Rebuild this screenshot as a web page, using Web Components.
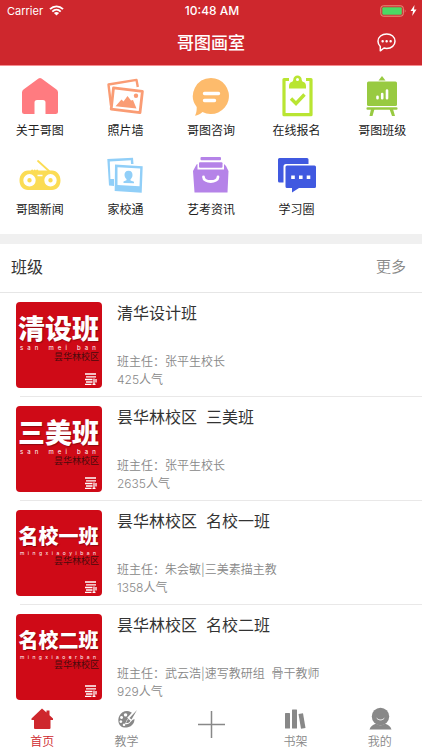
<!DOCTYPE html>
<html lang="zh-CN">
<head>
<meta charset="utf-8">
<meta name="viewport" content="width=device-width, initial-scale=1">
<title>哥图画室</title>
<style>
  html, body { margin: 0; height: 100%; }
  body { background: #fff; font-family: Inter, "Noto Sans CJK SC", sans-serif; color: #333; }
</style>
</head>
<body>
<studio-app></studio-app>

<script>
const define = (name, render) => customElements.define(name, class extends HTMLElement {
  connectedCallback() {
    if (this.shadowRoot) return;
    this.attachShadow({ mode: 'open' }).innerHTML = render(this);
  }
});

const icons = {
  house: `<path fill="#ff7b80" d="M20.500 4.600Q22 3.500 23.500 4.600L38.500 15.500Q40 16.600 40 18.500V37.500Q40 40 37.500 40H27.500V28.500Q27.500 26 25 26H19Q16.500 26 16.500 28.500V40H6.500Q4 40 4 37.500V18.500Q4 16.600 5.500 15.500Z"/>`,
  photos: `<g fill="none" stroke="#fa9c74" stroke-width="2.400" stroke-linejoin="round"><path d="M8 31.500 5.500 10.500 33.500 5.900 34.800 13"/><path stroke-width="2.800" fill="#fff" d="M10.500 13.800 39.400 17.300 37 38.600 8.200 35.100Z"/></g><path fill="#fa9c74" d="M12.500 32.300 18.500 25.500 20.500 27.500 24.500 22 28 26.500 30 26 33.500 34.500Z"/><circle cx="33" cy="21.800" r="2.200" fill="#fa9c74"/>`,
  bubble: `<path fill="#fdbb6c" d="M22 4a18 18 0 1 1-8.500 33.900C11 40 9 41 6 41.700 7.500 39 7.800 36 7.700 33A18 18 0 0 1 22 4Z"/><path stroke="#fff" stroke-width="3.400" stroke-linecap="round" d="M15.500 19.500H29.500M15.500 26.500H25.500"/>`,
  clipboard: `<path fill="none" stroke="#b9e532" stroke-width="3.200" stroke-linejoin="round" d="M14 5.500H9V40.700H36V5.500H31"/><path fill="#b9e532" fill-rule="evenodd" d="M22.500 1.500a4.200 4.200 0 0 1 4.200 4.200q0 1.800 1.800 2.300 2.500.8 2.500 4.500v2H14v-2q0-3.700 2.500-4.500 1.800-.5 1.800-2.300a4.200 4.200 0 0 1 4.200-4.200Zm0 2.500a1.500 1.500 0 1 0 0 3 1.500 1.500 0 0 0 0-3Z"/><path fill="none" stroke="#b9e532" stroke-width="3.400" d="m16 24.500 5 5 8.500-9"/>`,
  easel: `<g fill="#98ca41"><path d="M22 2 25.500 6.500H18.500Z"/><rect x="7" y="7.500" width="30" height="24.500" rx="1.500"/><rect x="6.500" y="33.200" width="31" height="2.600" rx="1"/><path d="M11 35h3.500L12.500 42H9.500ZM29.500 35H33L35 42H32Z"/></g><path stroke="#fff" stroke-width="2.600" stroke-linecap="round" d="M17.500 22.800v1.500M22.200 20v4.300M27 16.500v7.800"/>`,
  radio: `<path stroke="#fbdc54" stroke-width="1.800" stroke-linecap="round" d="M20 8 31 18"/><path fill="#fbdc54" d="M13 17.500q1-2 2.500 0 1-2 2.500 0 1-2 2.500 0H34c5 0 8.500 4.500 8.500 10S39 37 34 37H10c-5 0-8.500-4-8.500-9.500S5 17.500 10 17.500Z"/><g fill="none" stroke="#fff"><circle cx="11.500" cy="27.300" r="4.200" stroke-width="4"/><circle cx="32.500" cy="27.300" r="4.200" stroke-width="4"/><path stroke-width="1.500" d="M19.500 22.500H24.500"/></g>`,
  portraits: `<path fill="#91cff8" d="M4.300 6 30 4.700 30.500 11H28L27.800 7.200 6.800 8.400 7.400 26H11V33L6 32.500Z"/><path fill="#91cff8" fill-rule="evenodd" d="M12 11.500 39.700 13.300 38.700 39.700 11.700 38ZM14.500 14.200V32L36.500 33.300 37.200 15.600Z"/><path fill="#91cff8" d="M25.500 17.800c3 0 4 2 4 4.300 0 2-.9 3.400-2 4.200v1.200l3.500 1.300v1.500l-10.500-.4v-1.500l3-1.200v-1.200c-1.200-.9-2-2.300-2-4.200 0-2.300 1.200-4 4-4Z"/>`,
  drawer: `<g fill="#b583e8"><rect x="11.500" y="4" width="20.500" height="3.200" rx="1"/><rect x="10" y="9.300" width="23.500" height="5.500" rx="1"/><path d="M7.500 11.500 8.500 11V16.500H35V11L37 13 39.500 18 38.500 39.500H5.500L4 18Z"/></g><path fill="none" stroke="#fff" stroke-width="2.800" stroke-linecap="round" d="M14.500 24c0 6 14.500 6 14.500 0"/>`,
  chats: `<path fill="#4059e0" d="M4.500 5H32q1.500 0 1.500 1.500V11H11Q8.500 11 8.500 13.500V29.500H4.500Q3 29.500 3 28V6.500Q3 5 4.500 5Z"/><path fill="#4059e0" d="M12 12.500H39.500Q41 12.500 41 14V33.500Q41 35 39.500 35H24L17 39.500V35H12Q10.500 35 10.500 33.500V14Q10.500 12.500 12 12.500Z"/><path fill="#fff" d="M16.200 22.500h3.600v3.600h-3.600ZM24 22.500h3.600v3.600H24ZM31.700 22.500h3.600v3.600h-3.600Z"/>`,
  tabHome: `<path fill="currentColor" d="M12 1.500 16.500 5.500V3.500H19.500V8.200L23 11.500V13H20.500V21Q20.500 22 19.500 22H5Q4 22 4 21V13H1.500V11.500Z"/>`,
  tabPalette: `<path fill="currentColor" fill-rule="evenodd" d="M18.500 7.500C16 3.500 11 3 7.500 5.200 2.500 8.500 2 16 6 19.300c2.500 2 5.500 1.200 7 .9 4-.8 6.500-4 6.500-8.200l-2 1-3.500 3.500c-1.500 1-3.500 1-4 .2l1.500-2.700c0-1.500 1.500-2.500 2.800-2.300ZM10.500 6.200a1.700 1.700 0 1 0 .1 0ZM6.500 9a1.500 1.500 0 1 0 .1 0ZM5.800 13.200a1.400 1.400 0 1 0 .1 0ZM9 16.500a1.300 1.300 0 1 0 .1 0Z"/><path stroke="#fff" stroke-width="3.500" d="m13.500 12 6-6.500"/><path fill="currentColor" d="M22 3 16.500 12.500 14.500 11ZM13.500 12l2 1.700c-1 2-2.500 2.500-4.500 2.300 1-1 .7-2.800 2.500-4Z"/>`,
  tabBooks: `<g fill="currentColor"><rect x="2" y="6" width="5" height="15.500" rx=".5"/><rect x="9" y="2.500" width="5" height="19" rx=".5"/><path d="M15.500 7 20 6.300 22.500 21 18 21.700Z"/></g>`,
  tabPerson: `<g fill="currentColor"><circle cx="12.500" cy="9.500" r="8.700"/><path d="M1.500 22.500c1-3.500 3.500-5 6.500-5.800 3 2 6 2 9 0 3 .8 5.500 2.300 6.500 5.800Z"/></g><path fill="none" stroke="#fff" stroke-linecap="round" d="M9 11.500c2 2 5 2 7 0"/>`
};
const icon = (name, size) => `<svg width="${size}" height="${size}" viewBox="0 0 ${size} ${size}" fill="none" aria-hidden="true">${icons[name]}</svg>`;

define('status-bar', () => `
  <style>
    :host { display: grid; grid-template-columns: 1fr auto 1fr; align-items: center; height: 20px; padding: 1px 5px 0 7px; box-sizing: border-box; color: #fff; font-size: 11px; line-height: 16px; }
    .left, .right { display: flex; align-items: center; gap: 6px; }
    .right { justify-content: flex-end; gap: 3px; }
    time { font-size: 12px; font-weight: 500; }
    svg { display: block; }
  </style>
  <span class="left"><span>Carrier</span>
    <svg width="15" height="11" viewBox="0 0 15 11" fill="none" stroke="#fff" stroke-width="1.900"><path d="M1 4.200C4.700.4 10.300.4 14 4.200M3.300 6.600c2.500-2.400 5.900-2.400 8.400 0"/><path fill="#fff" stroke="none" d="M7.500 10.500 4.900 8c1.500-1.400 3.700-1.400 5.200 0Z"/></svg>
  </span>
  <time>10:48 AM</time>
  <span class="right">
    <svg width="27" height="12" viewBox="0 0 27 12"><rect x=".8" y=".8" width="22.500" height="10.400" rx="2.500" fill="none" stroke="#e6937f"/><rect x="2.300" y="2.300" width="19.500" height="7.400" rx="1" fill="#4cd964"/><path fill="#e6937f" d="M24.800 4.200q1.600 1.800 0 3.600Z"/></svg>
    <svg width="7" height="11" viewBox="0 0 7 11"><path fill="#fff" d="M4.500 0 .5 6H3L2.200 11 6.500 4.500H4Z"/></svg>
  </span>`);

define('app-header', () => `
  <style>
    :host { display: block; flex: none; background: #ce272d; border-bottom: 1px solid #f58c90; }
    .bar { display: grid; grid-template-columns: 1fr auto 1fr; align-items: center; height: 45px; padding: 0 25px; }
    h1 { grid-column: 2; margin: 0; color: #fff; font-size: 17px; line-height: 24px; font-weight: 500; }
    button { justify-self: end; display: block; border: 0; padding: 0; background: none; }
    svg { display: block; }
  </style>
  <status-bar></status-bar>
  <div class="bar">
    <h1><slot></slot></h1>
    <button aria-label="消息"><svg width="21" height="21" viewBox="0 0 21 21" fill="none" stroke="#fff" stroke-width="1.500" stroke-linejoin="round"><path d="M10.700 2C15.500 2 19 5 19 9.200s-3.500 7.200-8.300 7.200c-1 0-2-.1-2.700-.4L4.300 18.800V14.500C2.800 13 2 11.300 2 9.200 2 5 5.800 2 10.700 2Z"/><path stroke-width="2.400" stroke-linecap="round" d="M6.600 9.300h.1M10.600 9.300h.1M14.600 9.300h.1"/></svg></button>
  </div>`);

define('menu-item', el => `
  <style>
    :host { display: block; }
    a { display: flex; flex-direction: column; align-items: center; gap: 4px; color: #222; text-decoration: none; font-size: 12px; line-height: 17px; white-space: nowrap; }
    svg { display: block; }
  </style>
  <a href="#">${icon(el.getAttribute('icon'), 44)}<span><slot></slot></span></a>`);

define('menu-grid', () => `
  <style>
    :host { display: grid; grid-template-columns: repeat(5, 1fr); row-gap: 14px; margin: 0 -3px; padding: 8px 0 16px; }
  </style><slot></slot>`);

define('section-head', el => `
  <style>
    :host { display: flex; align-items: center; justify-content: space-between; height: 48px; padding: 0 16px 0 11px; border-top: 10px solid #f0f0f0; border-bottom: 1px solid #e6e6e6; }
    h2 { margin: 0; font-size: 16px; line-height: 24px; font-weight: 400; }
    a { color: #888; font-size: 15px; line-height: 24px; font-weight: 350; text-decoration: none; }
    h2, a { padding-bottom: 2px; }
  </style>
  <h2><slot></slot></h2><a href="#">${el.getAttribute('more')}</a>`);

define('class-cover', el => {
  const name = el.getAttribute('name');
  const letters = [...el.getAttribute('latin')].map(c => `<span>${c === ' ' ? '&nbsp;' : c}</span>`).join('');
  return `
  <style>
    :host { display: flex; flex-direction: column; flex: none; box-sizing: border-box; width: 86px; height: 86px; padding: 14px 3px 3px 2px; border-radius: 4px; background: #cf0a17; color: #fff; overflow: hidden; }
    .name { height: 28px; display: flex; align-items: center; justify-content: center; font-size: 27px; font-weight: 900; line-height: 28px; white-space: nowrap; text-shadow: 1px 1px 1px #8f0810; }
    .latin { display: flex; justify-content: space-between; padding: 0 3px 0 2px; font-size: 6px; line-height: 8px; }
    .campus { align-self: flex-end; color: #4a0a0c; font-size: 9px; line-height: 10px; }
    .four { height: 26px; font-size: 20px; }
    .four + .latin { font-size: 5px; line-height: 6px; }
    svg { display: block; align-self: flex-end; margin: auto 2px 0 0; }
  </style>
  <div class="name ${name.length > 3 ? 'four' : ''}">${name}</div>
  <div class="latin">${letters}</div>
  <div class="campus">昙华林校区</div>
  <svg width="12" height="12" viewBox="0 0 12 12" fill="none" stroke="#fff" stroke-width="1.300"><path d="M0 1H11M1 3.800H11M0 6.500H7.500M1 9H7.500M0 11.300H6.500M9 5.500V11M11 6V9.500M7.500 11.300H10.500"/></svg>`;
});

define('class-row', el => `
  <style>
    :host { display: block; }
    a { display: flex; align-items: flex-start; gap: 15px; padding: 9px 15px 7px 16px; color: #333; text-decoration: none; }
    .text { flex: 1; min-width: 0; }
    h3 { margin: 0 0 29px; font-size: 16px; line-height: 22px; font-weight: 400; white-space: pre; }
    p { margin: 0; color: #888; font-size: 12px; line-height: 18px; font-weight: 350; white-space: pre; }
    hr { margin: 0 0 0 20px; border: 0; height: 1px; background: #e9e8e8; }
  </style>
  <a href="#">
    <class-cover name="${el.getAttribute('cover')}" latin="${el.getAttribute('latin')}"></class-cover>
    <div class="text"><h3><slot></slot></h3><p>班主任：${el.getAttribute('teacher')}</p><p>${el.getAttribute('views')}人气</p></div>
  </a><hr>`);

define('tab-item', el => `
  <style>
    :host { display: flex; justify-content: center; flex: 1; color: #888; }
    :host([active]) { color: #ce272d; }
    a { display: flex; flex-direction: column; align-items: center; gap: 4px; color: inherit; text-decoration: none; font-size: 12px; line-height: 14px; font-weight: 350; }
    svg { display: block; }
  </style>
  <a href="#">${icon(el.getAttribute('icon'), 24)}<span><slot></slot></span></a>`);

define('tab-bar', () => `
  <style>
    :host { display: flex; flex: none; box-sizing: border-box; height: 49px; padding-top: 6px; background: #fff; }
  </style><slot></slot>`);

define('add-button', () => `
  <style>
    :host { display: flex; flex: 1; justify-content: center; align-items: flex-start; padding-top: 4px; }
    button { border: 0; padding: 0; background: none; color: #888; }
    svg { display: block; }
  </style>
  <button aria-label="添加"><svg width="27" height="27" viewBox="0 0 27 27" stroke="currentColor" stroke-width="1.500"><path d="M13.500 0V27M0 13.500H27"/></svg></button>`);

define('studio-app', () => `
  <style>
    :host { display: flex; flex-direction: column; height: 100%; overflow: hidden; }
    main { flex: 1; min-height: 0; overflow: hidden auto; scrollbar-width: none; }
  </style>
  <app-header>哥图画室</app-header>
  <main>
    <menu-grid>
      <menu-item icon="house">关于哥图</menu-item>
      <menu-item icon="photos">照片墙</menu-item>
      <menu-item icon="bubble">哥图咨询</menu-item>
      <menu-item icon="clipboard">在线报名</menu-item>
      <menu-item icon="easel">哥图班级</menu-item>
      <menu-item icon="radio">哥图新闻</menu-item>
      <menu-item icon="portraits">家校通</menu-item>
      <menu-item icon="drawer">艺考资讯</menu-item>
      <menu-item icon="chats">学习圈</menu-item>
    </menu-grid>
    <section-head more="更多">班级</section-head>
    <class-row cover="清设班" latin="san mei ban" teacher="张平生校长" views="425">清华设计班</class-row>
    <class-row cover="三美班" latin="san mei ban" teacher="张平生校长" views="2635">昙华林校区  三美班</class-row>
    <class-row cover="名校一班" latin="mingxiaoyiban" teacher="朱会敏|三美素描主教" views="1358">昙华林校区  名校一班</class-row>
    <class-row cover="名校二班" latin="mingxiaoerban" teacher="武云浩|速写教研组  骨干教师" views="929">昙华林校区  名校二班</class-row>
  </main>
  <tab-bar>
    <tab-item icon="tabHome" active>首页</tab-item>
    <tab-item icon="tabPalette">教学</tab-item>
    <add-button></add-button>
    <tab-item icon="tabBooks">书架</tab-item>
    <tab-item icon="tabPerson">我的</tab-item>
  </tab-bar>`);
</script>
</body>
</html>
